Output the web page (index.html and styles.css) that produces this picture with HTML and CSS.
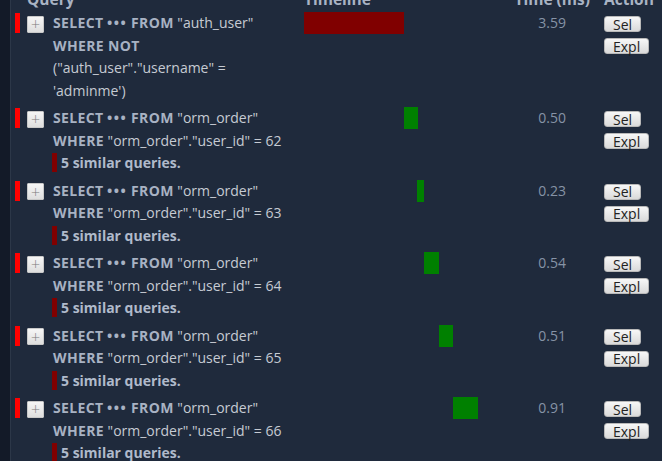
FILE: index.html
```html
<!DOCTYPE html>
<html>
<head>
<meta charset="utf-8">
<link rel="stylesheet" href="styles.css">
</head>
<body>
<div class="panel">
  <div class="table">
    <div class="head">
      <div class="th th-query">Query</div>
      <div class="th th-timeline">Timeline</div>
      <div class="th th-time">Time (ms)</div>
      <div class="th th-action">Action</div>
    </div>

    <div class="row">
      <div class="cell-color"><span class="color-mark"></span></div>
      <div class="cell-toggle"><button class="toggle" type="button">+</button></div>
      <div class="cell-query">
        <span class="line"><b>SELECT</b> <b class="dots">•••</b> <b>FROM</b> "auth_user"</span>
        <span class="line"><b>WHERE NOT</b></span>
        <span class="line">("auth_user"."username" =</span>
        <span class="line">'adminme')</span>
      </div>
      <div class="cell-timeline"><div class="bar bar-slow" style="margin-left:0px;width:100px"></div></div>
      <div class="cell-time">3.59</div>
      <div class="cell-actions"><button class="btn" type="button">Sel</button><button class="btn" type="button">Expl</button></div>
    </div>

    <div class="row">
      <div class="cell-color"><span class="color-mark"></span></div>
      <div class="cell-toggle"><button class="toggle" type="button">+</button></div>
      <div class="cell-query">
        <span class="line"><b>SELECT</b> <b class="dots">•••</b> <b>FROM</b> "orm_order"</span>
        <span class="line"><b>WHERE</b> "orm_order"."user_id" = 62</span>
        <strong class="similar"><span class="similar-mark"></span>5 similar queries.</strong>
      </div>
      <div class="cell-timeline"><div class="bar" style="margin-left:100px;width:14px"></div></div>
      <div class="cell-time">0.50</div>
      <div class="cell-actions"><button class="btn" type="button">Sel</button><button class="btn" type="button">Expl</button></div>
    </div>

    <div class="row">
      <div class="cell-color"><span class="color-mark"></span></div>
      <div class="cell-toggle"><button class="toggle" type="button">+</button></div>
      <div class="cell-query">
        <span class="line"><b>SELECT</b> <b class="dots">•••</b> <b>FROM</b> "orm_order"</span>
        <span class="line"><b>WHERE</b> "orm_order"."user_id" = 63</span>
        <strong class="similar"><span class="similar-mark"></span>5 similar queries.</strong>
      </div>
      <div class="cell-timeline"><div class="bar" style="margin-left:113px;width:7px"></div></div>
      <div class="cell-time">0.23</div>
      <div class="cell-actions"><button class="btn" type="button">Sel</button><button class="btn" type="button">Expl</button></div>
    </div>

    <div class="row">
      <div class="cell-color"><span class="color-mark"></span></div>
      <div class="cell-toggle"><button class="toggle" type="button">+</button></div>
      <div class="cell-query">
        <span class="line"><b>SELECT</b> <b class="dots">•••</b> <b>FROM</b> "orm_order"</span>
        <span class="line"><b>WHERE</b> "orm_order"."user_id" = 64</span>
        <strong class="similar"><span class="similar-mark"></span>5 similar queries.</strong>
      </div>
      <div class="cell-timeline"><div class="bar" style="margin-left:120px;width:15px"></div></div>
      <div class="cell-time">0.54</div>
      <div class="cell-actions"><button class="btn" type="button">Sel</button><button class="btn" type="button">Expl</button></div>
    </div>

    <div class="row">
      <div class="cell-color"><span class="color-mark"></span></div>
      <div class="cell-toggle"><button class="toggle" type="button">+</button></div>
      <div class="cell-query">
        <span class="line"><b>SELECT</b> <b class="dots">•••</b> <b>FROM</b> "orm_order"</span>
        <span class="line"><b>WHERE</b> "orm_order"."user_id" = 65</span>
        <strong class="similar"><span class="similar-mark"></span>5 similar queries.</strong>
      </div>
      <div class="cell-timeline"><div class="bar" style="margin-left:135px;width:14px"></div></div>
      <div class="cell-time">0.51</div>
      <div class="cell-actions"><button class="btn" type="button">Sel</button><button class="btn" type="button">Expl</button></div>
    </div>

    <div class="row">
      <div class="cell-color"><span class="color-mark"></span></div>
      <div class="cell-toggle"><button class="toggle" type="button">+</button></div>
      <div class="cell-query">
        <span class="line"><b>SELECT</b> <b class="dots">•••</b> <b>FROM</b> "orm_order"</span>
        <span class="line"><b>WHERE</b> "orm_order"."user_id" = 66</span>
        <strong class="similar"><span class="similar-mark"></span>5 similar queries.</strong>
      </div>
      <div class="cell-timeline"><div class="bar" style="margin-left:149px;width:25px"></div></div>
      <div class="cell-time">0.91</div>
      <div class="cell-actions"><button class="btn" type="button">Sel</button><button class="btn" type="button">Expl</button></div>
    </div>
  </div>
</div>
</body>
</html>
```

FILE: styles.css
```css
html, body {
  margin: 0;
  padding: 0;
  height: 100%;
}

body {
  background: #131a28;
  font-family: "Open Sans", "Noto Sans", sans-serif;
  font-size: 14px;
  overflow: hidden;
}

.panel {
  margin-left: 10px;
  border-left: 1px solid #2c3748;
  background: #1f2a3c;
  height: 100%;
  overflow: hidden;
}

.table {
  margin-top: -12px;
  padding-left: 5px;
}

.head,
.row {
  display: grid;
  grid-template-columns: 11px 26px 251px 196px 66px 1fr;
}

.head {
  height: 23px;
  line-height: 22.5px;
  font-weight: 700;
  font-size: 15.5px;
  color: #a9b3c3;
}

.th-query {
  grid-column: 1 / span 3;
  padding-left: 11px;
}

.th-timeline {
  grid-column: 4;
}

.th-time {
  grid-column: 5 / span 1;
  white-space: nowrap;
  text-align: right;
  margin-left: -40px;
  margin-right: -24px;
}

.th-action {
  grid-column: 6;
  padding-left: 38px;
  white-space: nowrap;
}

.row {
  padding: 1px 0 4px;
  line-height: 22.5px;
  color: #c6cbd3;
}

.color-mark {
  display: block;
  width: 5px;
  height: 20px;
  margin-top: 1px;
  margin-left: -1px;
  background: #ff0000;
}

.cell-toggle {
  padding-top: 3.5px;
}

.toggle {
  display: block;
  width: 17px;
  height: 17px;
  padding: 0;
  margin: 0;
  border: 1px solid #c9c9c9;
  border-radius: 1px;
  background: linear-gradient(#f6f6f6, #dedede);
  color: #7a7a7a;
  font-family: "DejaVu Sans", sans-serif;
  font-size: 12px;
  font-weight: 300;
  line-height: 14px;
  text-align: center;
}

.cell-query {
  padding-right: 8px;
}

.line {
  display: block;
  white-space: nowrap;
}

.cell-query b {
  color: #a8b2c3;
  font-weight: 700;
  letter-spacing: 0.35px;
}

.cell-query .dots {
  letter-spacing: 1.5px;
}

.similar {
  display: flex;
  align-items: flex-start;
  color: #b0bacb;
  font-weight: 700;
}

.similar-mark {
  display: block;
  width: 5px;
  height: 19px;
  margin-top: 1px;
  margin-left: -1px;
  margin-right: 4px;
  background: #800000;
}

.bar {
  height: 22px;
  background: #008000;
}

.bar-slow {
  background: #800000;
}

.cell-time {
  text-align: right;
  color: #8693a6;
}

.cell-actions {
  padding-left: 38px;
  padding-top: 4px;
  display: flex;
  flex-direction: column;
  align-items: flex-start;
  gap: 6px;
}

.btn {
  display: block;
  margin: 0;
  height: 16px;
  padding: 0 8px;
  border: 1px solid #b9b9b9;
  border-radius: 3px;
  background: linear-gradient(#f7f7f7, #dadada);
  color: #222;
  font-family: "Open Sans", sans-serif;
  font-size: 14px;
  line-height: 13px;
}
```
